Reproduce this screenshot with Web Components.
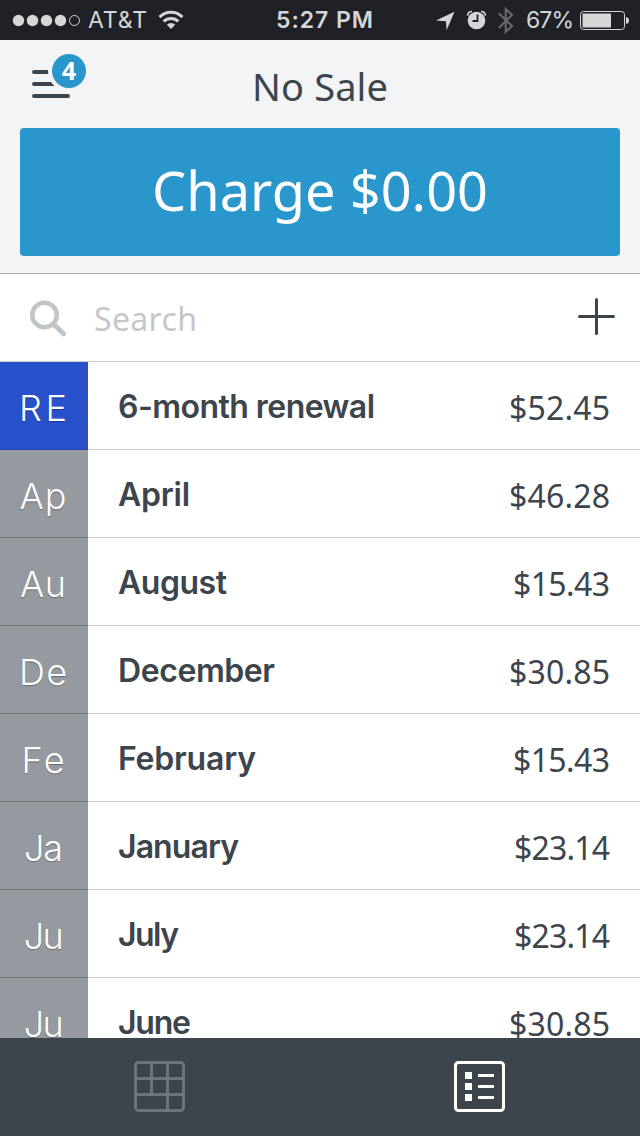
<!DOCTYPE html>
<html lang="en">
<head>
<meta charset="utf-8">
<title>Register</title>
<style>
body{margin:0;width:640px;height:1136px;overflow:hidden;background:#fff;font-family:"Noto Sans","Open Sans",sans-serif;color:#3d454c}
</style>
</head>
<body>
<register-app></register-app>
<script>
function define(name, html, setup) {
  const tpl = document.createElement('template');
  tpl.innerHTML = html;
  customElements.define(name, class extends HTMLElement {
    connectedCallback() {
      if (this.shadowRoot) return;
      this.attachShadow({mode: 'open'}).append(tpl.content.cloneNode(true));
      if (setup) setup(this, this.shadowRoot);
    }
  });
}

/* Tracks its text so that the line takes exactly the given width. */
define('fit-text', `<style>
:host{display:inline-block;white-space:nowrap}
span{display:inline-block}
</style><span><slot></slot></span>`, (host, root) => {
  const span = root.querySelector('span');
  const width = +host.getAttribute('width');
  const n = host.textContent.length;
  span.style.letterSpacing = (width - span.getBoundingClientRect().width) / (n - 1) + 'px';
  host.style.width = width + 'px';
});

define('status-bar', `<style>
:host{display:grid;grid-template-columns:276px 1fr auto;height:40px;background:#1f2126;color:#d5d6d8;font:400 23px/42px Inter,"Liberation Sans",sans-serif}
div{display:flex;align-items:center;height:40px}
svg{display:block;flex:none}
.l{padding-left:12px}.l fit-text{margin:0 11px 0 7px}
.c{font-weight:600}
.r{padding-right:11px}.r fit-text{margin-right:5px}
</style>
<div class="l">
<svg width="69" height="40" fill="#d5d6d8"><circle cx="6.5" cy="20.5" r="5.7"/><circle cx="20.5" cy="20.5" r="5.7"/><circle cx="34.5" cy="20.5" r="5.7"/><circle cx="48.5" cy="20.5" r="5.7"/><circle cx="62.5" cy="20.5" r="5" fill="none" stroke="#d5d6d8"/></svg>
<fit-text width="59">AT&amp;T</fit-text>
<svg width="26" height="40" fill="none" stroke="#d5d6d8" stroke-width="3"><path d="M1.6 17.1a16 16 0 0 1 22.8 0M5.6 21.4a10.6 10.6 0 0 1 14.8 0"/><path d="M13 29l-4.2-4.2a6 6 0 0 1 8.4 0z" fill="#d5d6d8" stroke="none"/></svg>
</div>
<div class="c"><fit-text width="97">5:27 PM</fit-text></div>
<div class="r">
<svg width="91" height="40" viewBox="435 0 91 40"><path d="M454.5 11.8L446.6 30.2L446 21.2L436 20.6Z" fill="#d5d6d8"/>
<circle cx="476.5" cy="20.5" r="8.8" fill="#d5d6d8"/><path d="M467.6 15.8Q467.6 11.6 472 11.5M485.4 15.8Q485.4 11.6 481 11.5" fill="none" stroke="#d5d6d8" stroke-width="1.6"/><path d="M477.5 14.5v6.5h-5" fill="none" stroke="#1f2126" stroke-width="1.8"/>
<path d="M498.8 13.2L512 26L505.7 32V9L512 14.8L498.8 28" fill="none" stroke="#696b6f" stroke-width="2"/></svg>
<fit-text width="48">67%</fit-text>
<svg width="50" height="40" viewBox="579 0 50 40"><rect x="580.5" y="11.5" width="44" height="18" rx="3" fill="none" stroke="#d5d6d8"/><path d="M582.5 13.5h28.5v14h-28.5z" fill="#d5d6d8"/><path d="M626 17q3 .5 3 3.5t-3 3.5z" fill="#d5d6d8"/></svg>
</div>`);

define('menu-button', `<style>
:host{display:block;position:relative;width:54px;height:48px}
svg{display:block}
b{position:absolute;left:20px;top:1px;width:34px;height:34px;border-radius:50%;background:#2996cc;box-shadow:0 0 0 4px #f2f4f6;color:#fff;font:700 25px/33px "Noto Sans",sans-serif;text-align:center}
</style><svg width="54" height="48" fill="none" stroke="#3d454c" stroke-width="4" stroke-linecap="round"><path d="M2 19H30M2 31H30M2 43H36"/></svg><b><slot></slot></b>`);

define('sale-header', `<style>
:host{display:block;box-sizing:border-box;height:234px;background:#f2f4f6;border-bottom:1px solid #a9adb2}
.top{display:grid;grid-template-columns:1fr auto 1fr;height:88px}
menu-button{margin:13px 0 0 32px}
.title{font-size:38px;line-height:92px}
.charge{display:flex;justify-content:center;height:128px;margin:0 20px;border-radius:4px;background:#2996cc;color:#fff;font-size:54px;line-height:124px}
</style>
<div class="top"><menu-button>4</menu-button><fit-text class="title" width="136">No Sale</fit-text></div>
<div class="charge"><fit-text width="336">Charge $0.00</fit-text></div>`);

define('search-bar', `<style>
:host{display:flex;align-items:center;box-sizing:border-box;height:88px;border-bottom:1px solid #cbccce;padding:0 24px 0 28px;color:#c5c6cc;font-size:32px;line-height:88px}
fit-text{margin:2px auto 0 26px}
</style>
<svg width="40" height="40" fill="none" stroke="#bfc5c9" stroke-width="4.5"><circle cx="16.5" cy="17" r="12.3"/><path d="M25.5 26L35.5 35.8" stroke-width="5" stroke-linecap="round"/></svg>
<fit-text width="103">Search</fit-text>
<svg width="39" height="39" stroke="#3d454c" stroke-width="3" stroke-linecap="round"><path d="M2.5 18.5H36.5M19.5 1.5V35.5" /></svg>`);

define('item-row', `<style>
:host{display:grid;grid-template-columns:88px 1fr auto;height:88px;line-height:88px;font-size:32px}
div{box-sizing:border-box;height:88px;border-bottom:1px solid #cbccce}
.tile{background:var(--tile,#959aa1);border-bottom:1px solid rgba(0,0,0,.22);color:#fff;font:350 36px/92px Inter,"Liberation Sans",sans-serif;text-align:center;text-shadow:0 1px 1px rgba(0,0,0,.3);padding-right:2px}
.name{font-family:Inter,"Liberation Sans",sans-serif;font-weight:600;padding-left:30px;line-height:89px}
.price{padding-right:30px;line-height:92px}
</style><div class="tile"></div><div class="name"></div><div class="price"></div>`, (host, root) => {
  const fit = (text, w) => {
    const el = document.createElement('fit-text');
    el.textContent = text;
    el.setAttribute('width', w);
    return el;
  };
  const d = host.dataset;
  root.querySelector('.tile').append(fit(d.code, d.codeWidth));
  root.querySelector('.name').append(fit(d.name, d.nameWidth));
  root.querySelector('.price').append(fit(d.price, d.priceWidth));
});

define('item-list', `<style>
:host{display:block;height:676px;overflow:hidden}
</style>
<item-row style="--tile:#2951cc" data-code="RE" data-code-width="48" data-name="6-month renewal" data-name-width="257" data-price="$52.45" data-price-width="101"></item-row>
<item-row data-code="Ap" data-code-width="47" data-name="April" data-name-width="72" data-price="$46.28" data-price-width="101"></item-row>
<item-row data-code="Au" data-code-width="46" data-name="August" data-name-width="109" data-price="$15.43" data-price-width="97"></item-row>
<item-row data-code="De" data-code-width="48" data-name="December" data-name-width="157" data-price="$30.85" data-price-width="101"></item-row>
<item-row data-code="Fe" data-code-width="43" data-name="February" data-name-width="138" data-price="$15.43" data-price-width="97"></item-row>
<item-row data-code="Ja" data-code-width="39" data-name="January" data-name-width="121" data-price="$23.14" data-price-width="96"></item-row>
<item-row data-code="Ju" data-code-width="40" data-name="July" data-name-width="61" data-price="$23.14" data-price-width="96"></item-row>
<item-row data-code="Ju" data-code-width="40" data-name="June" data-name-width="73" data-price="$30.85" data-price-width="101"></item-row>`);

define('tab-bar', `<style>
:host{display:grid;grid-template-columns:1fr 1fr;place-items:center;height:98px;background:#3d454c}
svg{display:block}
</style>
<svg width="52" height="52" viewBox="0 0 52 52" fill="none" stroke="#6e727b" stroke-width="3"><rect x="1.5" y="1.5" width="48" height="48" rx="3"/><path d="M1.5 17.5H49.5M1.5 33.5H49.5M17.5 1.5V33.5M33.5 1.5V49.5"/></svg>
<svg width="52" height="52" viewBox="0 0 52 52" fill="none" stroke="#fff" stroke-width="3"><rect x="1.5" y="1.5" width="48" height="48" rx="3"/><path d="M24 14.5H40M24 25.5H40M24 36.5H40"/><path d="M11 11h7v7h-7zM11 22h7v7h-7zM11 33h7v7h-7z" fill="#fff" stroke="none"/></svg>`);

define('register-app', `<style>
:host{display:flex;flex-direction:column;height:1136px}
</style><status-bar></status-bar><sale-header></sale-header><search-bar></search-bar><item-list></item-list><tab-bar></tab-bar>`);
</script>
</body>
</html>
